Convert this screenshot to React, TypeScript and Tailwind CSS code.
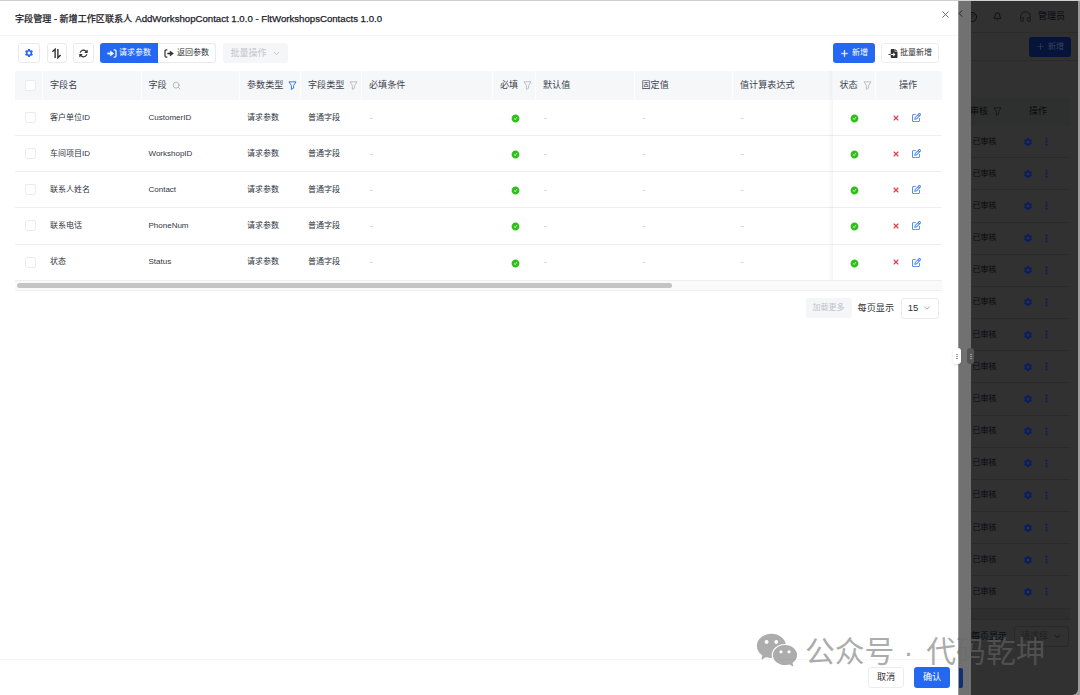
import React from "react";
import {
  AiFillCheckCircle,
  AiFillWechat,
  AiOutlinePlus,
} from "react-icons/ai";
import {
  FaArrowsRotate,
  FaFileImport,
  FaRegPenToSquare,
  FaRightFromBracket,
  FaRightToBracket,
} from "react-icons/fa6";
import { MdSettings } from "react-icons/md";
import { Bell, ChevronDown, ChevronLeft, Headphones, Search, X } from "lucide-react";

const columns =
  "grid grid-cols-[28px_98.5px_98.5px_61px_61px_131px_43px_98.5px_98.5px_99.5px_43.5px_66px]";

const fields = [
  { name: "客户单位ID", field: "CustomerID" },
  { name: "车间项目ID", field: "WorkshopID" },
  { name: "联系人姓名", field: "Contact" },
  { name: "联系电话", field: "PhoneNum" },
  { name: "状态", field: "Status" },
];

const Funnel = ({ className = "text-[#b5b8be]" }: { className?: string }) => (
  <svg
    viewBox="0 0 16 16"
    className={`w-[9px] h-[9px] shrink-0 ${className}`}
    fill="none"
    stroke="currentColor"
    strokeWidth="1.6"
    strokeLinejoin="round"
  >
    <path d="M1.8 1.5h12.4L10 8v4.6L6 15V8z" />
  </svg>
);

const Checkbox = () => (
  <span className="w-[11px] h-[11px] ml-[3px] rounded-[2px] border border-[#e9ebef] bg-white" />
);

const SortIcon = () => (
  <svg
    viewBox="0 0 16 16"
    className="w-[11px] h-[11px]"
    fill="none"
    stroke="currentColor"
    strokeWidth="2"
  >
    <path d="M2 5.5L6 1.8V14.5" />
    <path d="M10 1.5v12.7l4-4" />
  </svg>
);

// arrow in or out of a square bracket
const BracketArrow = ({ out = false }: { out?: boolean }) => (
  <svg viewBox="0 0 18 16" className="w-[10px] h-[9px]" fill="none" stroke="currentColor">
    {out ? (
      <>
        <path d="M6 1.5H4a2.2 2.2 0 0 0-2.2 2.2v8.6A2.2 2.2 0 0 0 4 14.5h2" strokeWidth="2.2" />
        <path d="M6 8h6" strokeWidth="3" />
        <path d="M11 3.5v9L17 8z" fill="currentColor" strokeWidth="1" />
      </>
    ) : (
      <>
        <path d="M12 1.5h2a2.2 2.2 0 0 1 2.2 2.2v8.6a2.2 2.2 0 0 1-2.2 2.2h-2" strokeWidth="2.2" />
        <path d="M0.5 8h6" strokeWidth="3" />
        <path d="M6 3.5v9L12 8z" fill="currentColor" strokeWidth="1" />
      </>
    )}
  </svg>
);

const HeadCell = ({ children }: { children?: React.ReactNode }) => (
  <div className="flex items-center gap-[5px] pl-[7px] border-r border-[#fdfdfe] whitespace-nowrap">
    {children}
  </div>
);

const Cell = ({ children }: { children?: React.ReactNode }) => (
  <div className="flex items-center pl-[7px] whitespace-nowrap">{children}</div>
);

const Dash = () => (
  <Cell>
    <span className="ml-[1px] text-[#a8abb2]">-</span>
  </Cell>
);

const Toolbar = () => (
  <div className="flex items-center h-5 mt-[7px] pl-[18px] pr-[19px] text-[8px] text-[#303133]">
    <button className="flex items-center justify-center w-[22px] h-5 rounded-[3px] border border-[#e8eaee] text-[#2468f2]">
      <MdSettings className="w-[10px] h-[10px]" />
    </button>
    <button className="flex items-center justify-center w-5 h-5 ml-[6.5px] rounded-[3px] border border-[#e8eaee]">
      <SortIcon />
    </button>
    <button className="flex items-center justify-center w-[21px] h-5 ml-[6px] rounded-[3px] border border-[#e8eaee]">
      <FaArrowsRotate className="w-[9px] h-[9px]" />
    </button>
    <div className="flex ml-[6.5px] h-5">
      <button className="flex items-center justify-center gap-[2px] w-[58px] rounded-l-[3px] bg-[#2468f2] text-white">
        <BracketArrow />
        请求参数
      </button>
      <button className="flex items-center justify-center gap-[3px] w-[58px] rounded-r-[3px] border border-l-0 border-[#e8eaee]">
        <BracketArrow out />
        返回参数
      </button>
    </div>
    <button className="flex items-center justify-center gap-[5px] w-[65px] h-5 ml-[7px] rounded-[3px] bg-[#f5f6f8] text-[9px] text-[#c0c4cc]">
      批量操作
      <ChevronDown className="w-[9px] h-[9px]" strokeWidth={2.5} />
    </button>
    <button className="flex items-center justify-center gap-[3px] w-[42px] h-5 ml-auto rounded-[3px] bg-[#2468f2] text-white">
      <AiOutlinePlus className="w-[9px] h-[9px]" strokeWidth={50} />
      新增
    </button>
    <button className="flex items-center justify-center gap-[2px] w-[58px] h-5 ml-[6px] rounded-[3px] border border-[#ebedf0]">
      <FaFileImport className="w-[10px] h-[9px]" />
      批量新增
    </button>
  </div>
);

const FieldTable = () => (
  <div className="relative w-[927px] ml-[15px] mt-[8px]">
    <div className={`${columns} h-[29px] rounded-t-[3px] bg-[#f6f7f9] text-[9.1px] text-[#3d4452]`}>
      <HeadCell>
        <Checkbox />
      </HeadCell>
      <HeadCell>字段名</HeadCell>
      <HeadCell>
        字段
        <Search className="w-[9px] h-[9px] text-[#a3a6ad]" />
      </HeadCell>
      <HeadCell>
        参数类型
        <Funnel className="text-[#2468f2]" />
      </HeadCell>
      <HeadCell>
        字段类型
        <Funnel />
      </HeadCell>
      <HeadCell>必填条件</HeadCell>
      <HeadCell>
        必填
        <Funnel />
      </HeadCell>
      <HeadCell>默认值</HeadCell>
      <HeadCell>固定值</HeadCell>
      <HeadCell>值计算表达式</HeadCell>
      <HeadCell>
        状态
        <Funnel />
      </HeadCell>
      <div className="flex items-center pl-[23px]">操作</div>
    </div>
    {fields.map((item) => (
      <div
        key={item.field}
        className={`${columns} h-[36.15px] border-b border-[#eceef1] text-[8px] text-[#303642]`}
      >
        <Cell>
          <Checkbox />
        </Cell>
        <Cell>{item.name}</Cell>
        <Cell>{item.field}</Cell>
        <Cell>请求参数</Cell>
        <Cell>普通字段</Cell>
        <Dash />
        <div className="flex items-center justify-center pt-[2px] pl-[1px]">
          <AiFillCheckCircle className="w-[9px] h-[9px] text-[#2fbf1b]" />
        </div>
        <Dash />
        <Dash />
        <Dash />
        <div className="flex items-center justify-center pt-[2px]">
          <AiFillCheckCircle className="w-[9px] h-[9px] text-[#2fbf1b]" />
        </div>
        <div className="flex items-center gap-[12px] pl-[16px]">
          <X className="w-[8px] h-[8px] text-[#e5404f]" strokeWidth={3.5} />
          <FaRegPenToSquare className="w-[9px] h-[9px] text-[#3a76f3]" />
        </div>
      </div>
    ))}
    <div className="flex items-center h-[10px] px-[2px] border-b border-[#f0f0f0] bg-[#fafafa]">
      <div className="w-[655px] h-[5px] rounded-full bg-[#c4c4c4]" />
    </div>
    {/* shadow of the fixed columns */}
    <div className="absolute top-0 left-[813px] w-[5px] h-[209px] bg-linear-to-r from-transparent to-black/4" />
  </div>
);

const Drawer = () => (
  <div className="flex flex-col w-[958px] h-full bg-white">
    <div className="flex items-center h-[35px] pl-[15px] border-b border-[#f5f6f7]">
      <h1 className="pt-[2px] text-[9.1px] text-[#1d2129] [-webkit-text-stroke:0.25px] whitespace-nowrap">
        字段管理 - 新增工作区联系人
        <span className="ml-[3px] text-[9.65px]">
          AddWorkshopContact 1.0.0 - FltWorkshopsContacts 1.0.0
        </span>
      </h1>
      <X className="w-[11px] h-[11px] ml-auto mr-[7px] mb-[8px] text-[#5b606b]" />
    </div>
    <Toolbar />
    <FieldTable />
    <div className="flex items-center justify-end mt-[7px] pr-[19px] text-[9.1px] text-[#303133]">
      <span className="flex items-center justify-center w-[46px] h-5 rounded-[3px] bg-[#f5f6f8] text-[8px] text-[#c0c4cc]">
        加载更多
      </span>
      <span className="ml-[6px]">每页显示</span>
      <span className="flex items-center justify-center gap-[4px] w-[38px] h-[21px] ml-[7px] rounded-[3px] border border-[#eaecef] text-[9.5px]">
        15
        <ChevronDown className="w-[10px] h-[10px] text-[#8f939b]" />
      </span>
    </div>
    <div className="flex items-center justify-end gap-[10px] h-[36px] mt-auto pr-[8px] border-t border-[#f5f6f7] text-[9.1px]">
      <button className="w-[36px] h-[21px] rounded-[3px] border border-[#ebedf0] bg-white text-[#303133]">
        取消
      </button>
      <button className="w-[36px] h-[21px] rounded-[3px] bg-[#2468f2] text-white">确认</button>
    </div>
  </div>
);

const BackPage = () => (
  <div className="flex flex-col w-[107px] h-full overflow-hidden rounded-br-[6px] bg-[#313131] text-[#080a0d]">
    <div className="flex items-center h-[32px] border-b border-[#2b2b2b] text-[9px]">
      <span className="-ml-[4px] flex items-center justify-center w-[10px] h-[10px] rounded-full border border-[#0c0c0c] text-[7px]">
        ?
      </span>
      <Bell className="w-[9px] h-[9px] ml-[16px]" />
      <Headphones className="w-[13px] h-[13px] ml-[17px] text-[#1c1c1c]" />
      <span className="ml-[6px] whitespace-nowrap">管理员</span>
    </div>
    <div className="flex items-center justify-end h-[28px] pr-[7px] border-b border-[#2b2b2b]">
      <button className="flex items-center justify-center gap-[3px] w-[42px] h-5 rounded-[3px] bg-[#07143a] text-[8px] text-[#37415c]">
        <AiOutlinePlus className="w-[9px] h-[9px]" />
        新增
      </button>
    </div>
    <div className="flex items-center h-[29px] mt-[36px] mr-[8px] bg-[#2e3030] text-[9px] whitespace-nowrap">
      <span className="-ml-[1px]">审核</span>
      <Funnel className="ml-[5px] text-[#171717]" />
      <span className="ml-[27px]">操作</span>
    </div>
    {Array.from({ length: 15 }, (_, i) => (
      <div
        key={i}
        className="flex items-center h-[32.18px] shrink-0 pl-[1.5px] mr-[8px] border-b border-[#2b2b2b] text-[8px]"
      >
        已审核
        <MdSettings className="w-[10px] h-[10px] ml-[26px] text-[#061d66]" />
        <svg viewBox="0 0 4 12" className="w-[3px] h-[9px] ml-[12px] fill-[#071d5e]">
          <circle cx="2" cy="2" r="1.3" />
          <circle cx="2" cy="6" r="1.3" />
          <circle cx="2" cy="10" r="1.3" />
        </svg>
      </div>
    ))}
    <div className="h-[11px] mr-[8px] border-b border-[#2b2b2b] bg-[#2e2e2e]" />
    <div className="flex items-center h-[34px] text-[9px] whitespace-nowrap">
      每页显示
      <span className="flex items-center justify-center gap-[5px] w-[55px] h-[21px] ml-[7px] rounded-[3px] border border-[#292929] text-[#202020]">
        请选择
        <ChevronDown className="w-[9px] h-[9px] text-[#0c0c0c]" />
      </span>
    </div>
  </div>
);

const Dots = () => (
  <span className="flex flex-col gap-[1px]">
    <i className="w-[2px] h-[1px] bg-[#999]" />
    <i className="w-[2px] h-[1px] bg-[#999]" />
    <i className="w-[2px] h-[1px] bg-[#999]" />
  </span>
);

const App = () => {
  return (
    <div className="relative flex w-[1080px] h-[695px] overflow-hidden border-t border-[#cfcfcf] bg-[#9a9a9a] leading-none font-['Liberation_Sans','Noto_Sans_CJK_SC',sans-serif]">
      <Drawer />
      <div className="flex flex-col justify-between items-start w-[13px] h-full border-l border-[#969696] bg-[#717171]">
        <ChevronLeft className="w-[11px] h-[11px] mt-[7px] -ml-[4px] text-[#1c1c1c]" />
        <div className="w-[4px] h-[20px] mb-[7px] rounded-r-[2px] bg-[#103173]" />
      </div>
      <BackPage />
      {/* resize handles */}
      <div className="absolute top-[347px] left-[953px] flex items-center justify-center w-[8px] h-[16px] rounded-[3px] bg-white shadow-sm">
        <Dots />
      </div>
      <div className="absolute top-[347px] left-[967px] flex items-center justify-center w-[7px] h-[16px] rounded-[3px] bg-[#555]">
        <Dots />
      </div>
      <div className="absolute top-[626px] left-[754px] flex items-center text-[#6a6a6a] opacity-55 whitespace-nowrap">
        <AiFillWechat className="w-[46px] h-[46px]" />
        <span className="ml-[5px] pt-[3px] text-[29.8px]">公众号</span>
        <span className="ml-[9px] pt-[3px] text-[29.8px]">·</span>
        <span className="ml-[13px] pt-[3px] text-[29.8px]">代码乾坤</span>
      </div>
    </div>
  );
};

export default App;
